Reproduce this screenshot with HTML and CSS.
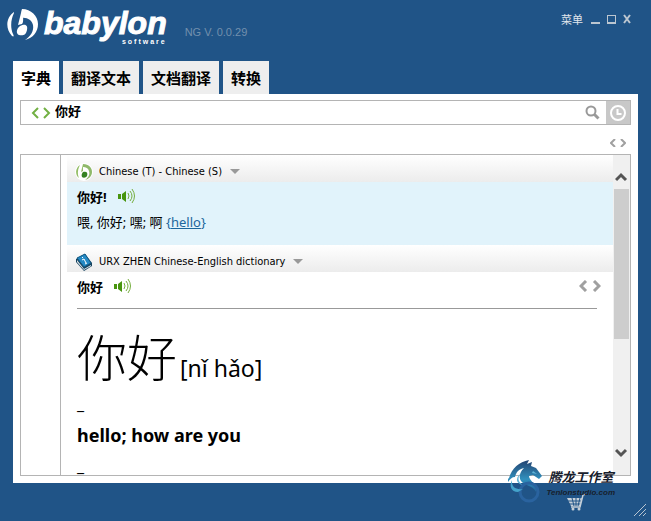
FILE: index.html
```html
<!DOCTYPE html>
<html lang="zh-CN">
<head>
  <meta charset="UTF-8" />
  <meta name="viewport" content="width=device-width, initial-scale=1.0" />
  <title>Babylon NG</title>
  <link rel="stylesheet" href="styles.css">
</head>
<body>
  <!-- Title bar -->
  <header class="title-bar">
    <div class="logo">
      <svg class="logo-mark" viewBox="0 0 32 32" aria-hidden="true">
        <path d="M7 3C-1 8-2 20 5 27c2 1 2 0 1-2C3 18 4 10 7 4z"/>
        <path d="M15 0c9 0 16 7 16 15 0 8-5 14-13 16 6-4 9-9 8-15-1-5-6-8-12-7z"/>
        <path d="M15 0l-4 16 4-1c2-2 1-9 0-15z"/>
        <path d="M13 17c6-3 8 0 7 4-1 5-4 6-8 5-3-1-3-6 1-9z"/>
      </svg>
      <div class="logo-text">
        <span class="logo-name">babylon</span>
        <span class="logo-sub">software</span>
      </div>
    </div>
    <span class="version">NG V. 0.0.29</span>
    <div class="window-controls">
      <button class="menu-button">菜单</button>
      <button class="window-button" aria-label="Minimize">
        <svg width="11" height="12" viewBox="0 0 11 12"><path d="M1 10h9" stroke-width="2"/></svg>
      </button>
      <button class="window-button" aria-label="Maximize">
        <svg width="11" height="12" viewBox="0 0 11 12"><path d="M1.500 2v8M1 2.500h9M9.500 2v8"/><path d="M1 10h9" stroke-width="2"/></svg>
      </button>
      <button class="window-button" aria-label="Close">
        <svg width="11" height="12" viewBox="0 0 11 12"><path d="M2 2l6 8M8 2l-6 8" stroke-width="2"/></svg>
      </button>
    </div>
  </header>

  <!-- Tabs -->
  <nav class="tabs">
    <button class="tab active">字典</button>
    <button class="tab">翻译文本</button>
    <button class="tab">文档翻译</button>
    <button class="tab">转换</button>
  </nav>

  <main class="panel">
    <!-- Search box -->
    <div class="search-box">
      <svg class="search-arrows" width="20" height="12" viewBox="0 0 20 12" aria-hidden="true"><path d="M7 1L2 6l5 5M13 1l5 5-5 5"/></svg>
      <input class="search-input" type="text" value="你好" aria-label="查词">
      <button class="search-button" aria-label="Search">
        <svg width="16" height="16" viewBox="0 0 16 16"><circle cx="7" cy="6" r="4.500"/><path d="M10.500 9.500l4 4" stroke-width="3"/></svg>
      </button>
      <button class="history-button" aria-label="History">
        <svg width="18" height="18" viewBox="0 0 18 18"><circle cx="9" cy="9" r="7"/><path d="M8.500 5v5h4"/></svg>
      </button>
    </div>

    <div class="result-nav">
      <button class="nav-arrow small" aria-label="Previous"><svg width="6" height="8" viewBox="0 0 6 8"><path d="M5 0L1 4l4 4"/></svg></button>
      <button class="nav-arrow small" aria-label="Next"><svg width="6" height="8" viewBox="0 0 6 8"><path d="M1 0l4 4-4 4"/></svg></button>
    </div>

    <!-- Results -->
    <div class="results">
      <aside class="gutter"></aside>
      <div class="entries">
        <section class="entry highlighted">
          <div class="entry-header">
            <svg class="entry-icon" viewBox="0 0 18 18" aria-hidden="true">
              <circle cx="9" cy="9" r="9" fill="#fff"/>
              <path d="M5 2C0 5 0 12 4 15 2 10 3 6 5 2z" fill="#93bd65"/>
              <path d="M8 1c6 0 9 4 9 8s-3 7-7 8c4-3 5-6 4-9-1-3-3-4-6-4z" fill="#8fb96a"/>
              <path d="M8 1L6 9l2-1z" fill="#93bd65"/>
              <path d="M8 9c4-1 5 1 4 4-1 2-4 2-5 1-1-2 0-4 1-5z" fill="#348220"/>
            </svg>
            <span class="entry-title">Chinese (T) - Chinese (S)</span>
            <button class="dropdown" aria-label="Options"></button>
          </div>
          <div class="entry-body">
            <div class="headword">
              <b>你好!</b>
              <button class="speak" aria-label="Listen">
                <svg width="17" height="14" viewBox="0 0 17 14"><path class="solid" d="M0 5h3v5H0zM4 5l4-3v11L4 10z"/><path d="M10 4q2 3 0 6M12 2q4 5 0 10M14 0q5 7 0 14"/></svg>
              </button>
            </div>
            <p class="definition">喂, 你好; 嘿; 啊 <a href="#hello">{<u>hello</u>}</a></p>
          </div>
        </section>

        <section class="entry">
          <div class="entry-header">
            <svg class="entry-icon" viewBox="0 0 18 18" aria-hidden="true">
              <path d="M1 6l9-5 7 9v3l-8 5-8-9z" fill="#17435f"/>
              <path d="M2 7l7 9 7-4v1l-7 4-7-8z" fill="#e2ebef"/>
              <path d="M2 5l8-4 6 9-7 4z" fill="#2389c4"/>
              <path d="M2 5l8-4 6 9-7 4z" fill="none" stroke="#125881"/>
              <path d="M7 5l1-1M7 7l2-1 2 4M10 11l2-1" fill="none" stroke="#fff"/>
            </svg>
            <span class="entry-title">URX ZHEN Chinese-English dictionary</span>
            <button class="dropdown" aria-label="Options"></button>
          </div>
          <div class="entry-body">
            <div class="headword">
              <b>你好</b>
              <button class="speak" aria-label="Listen">
                <svg width="17" height="14" viewBox="0 0 17 14"><path class="solid" d="M0 5h3v5H0zM4 5l4-3v11L4 10z"/><path d="M10 4q2 3 0 6M12 2q4 5 0 10M14 0q5 7 0 14"/></svg>
              </button>
              <div class="entry-nav">
                <button class="nav-arrow" aria-label="Previous"><svg width="9" height="12" viewBox="0 0 9 12"><path d="M7 1L2 6l5 5"/></svg></button>
                <button class="nav-arrow" aria-label="Next"><svg width="9" height="12" viewBox="0 0 9 12"><path d="M2 1l5 5-5 5"/></svg></button>
              </div>
            </div>
            <hr>
            <p class="pinyin"><span class="hanzi">你好</span>[nǐ hǎo]</p>
            <p class="dash">_</p>
            <p class="meaning">hello; how are you</p>
            <p class="dash">_</p>
          </div>
        </section>
      </div>

      <div class="scrollbar">
        <button class="scroll-button" aria-label="Scroll up"><svg width="13" height="10" viewBox="0 0 13 10"><path d="M1 8l5-5 5 5"/></svg></button>
        <div class="scroll-thumb"></div>
        <button class="scroll-button down" aria-label="Scroll down"><svg width="13" height="10" viewBox="0 0 13 10"><path d="M1 2l5 5 5-5"/></svg></button>
      </div>
    </div>
  </main>

  <footer class="status-bar">
    <button class="cart" aria-label="Shop">
      <svg width="20" height="18" viewBox="0 0 20 18"><path d="M0 5h15l-2 8H4z" fill="#c6d0d9"/><path d="M1 8h14M2 11h12M5 5l2 8M9 5v8M13 5l-2 8" stroke="#205487" fill="none"/><path d="M19 1l-3 1-3 12H4" stroke="#c6d0d9" fill="none" stroke-width="1.500"/><circle cx="6" cy="16" r="1.500" fill="#c6d0d9"/><circle cx="12" cy="16" r="1.500" fill="#c6d0d9"/></svg>
    </button>
    <svg class="grip" width="14" height="14" viewBox="0 0 14 14" aria-hidden="true"><path d="M1 13L13 1M6 13l7-7M10 13l3-3"/></svg>
  </footer>

  <!-- Studio badge over the bottom edge -->
  <div class="studio">
    <svg class="studio-logo" width="36" height="44" viewBox="0 0 36 44" aria-hidden="true">
      <defs>
        <linearGradient id="dragon" x1="0" y1="0" x2="0" y2="1">
          <stop offset="0" stop-color="#234270"/>
          <stop offset=".6" stop-color="#3190bd"/>
          <stop offset="1" stop-color="#226398"/>
        </linearGradient>
      </defs>
      <path d="M1 18C4 8 11 2 21 0l-2 4 5-2-1 4 5 2 6 8-3 3-6-4-4 1c0 5 9 8 7 16-3-7-12-6-15-11-3-5 0-10 3-13-5 1-8 4-9 9-3 0-5 2-7 5 0-4 0-3 1-4z" fill="url(#dragon)"/>
      <path d="M13 13c-4 5-3 9 2 12-6-1-9-6-2-12zM25 11l4 3-5-1z" fill="#5fb4d8"/>
      <circle cx="21" cy="32" r="9" fill="none" stroke="#2a639f" stroke-width="3"/>
      <path d="M4 20c-1 7 4 10 11 9l-5 3C3 32 1 26 4 20z" fill="#44a3cb"/>
    </svg>
    <div class="studio-text">
      <span class="studio-name">腾龙工作室</span>
      <span class="studio-url">Tenlonstudio.com</span>
    </div>
  </div>
</body>
</html>
```
FILE: styles.css
```css
:root {
  --blue: #205487;
  --border: #b4b4b4;
  --text-font: "Noto Sans", "Noto Sans CJK SC", sans-serif;
}

* {
  margin: 0;
  padding: 0;
  box-sizing: border-box;
}
body {
  font-family: var(--text-font);
  background: var(--blue);
  color: #000;
  height: 100vh;
  display: flex;
  flex-direction: column;
  overflow: hidden;
  position: relative;
}
button {
  border: none;
  background: none;
  font-family: inherit;
  cursor: pointer;
}
svg { display: block; }

/* Title bar */
.title-bar {
  display: flex;
  align-items: flex-start;
  height: 61px;
  padding: 9px 18px 0 7px;
}
.logo {
  display: flex;
  gap: 5px;
}
.logo-mark {
  width: 32px;
  height: 32px;
  fill: #fff;
}
.logo-text {
  display: flex;
  flex-direction: column;
  color: #fff;
  font-family: "Liberation Sans", sans-serif;
  font-weight: bold;
}
.logo-name {
  font-size: 32px;
  line-height: 29px;
  font-style: italic;
  -webkit-text-stroke: 1px #fff;
}
.logo-sub {
  font-size: 7px;
  line-height: 7px;
  letter-spacing: 2px;
  text-align: right;
}
.version {
  margin: 16px 0 0 18px;
  color: #7390ad;
  font-family: "Liberation Sans", sans-serif;
  font-size: 11px;
  line-height: 14px;
}
.window-controls {
  display: flex;
  align-items: center;
  gap: 5px;
  margin-left: auto;
  padding-top: 2px;
}
.menu-button {
  color: #e0e6ec;
  font-family: "Noto Sans CJK SC", sans-serif;
  font-size: 11px;
  line-height: 16px;
  margin-right: 2px;
}
.window-button svg {
  fill: none;
  stroke: #bcc6d0;
}

/* Tabs */
.tabs {
  display: flex;
  gap: 4px;
  padding-left: 13px;
}
.tab {
  height: 33px;
  padding: 0 8px;
  background: #eee;
  font-family: "Noto Sans CJK SC", sans-serif;
  font-size: 15px;
  font-weight: bold;
}
.tab.active { background: #fff; }

.panel {
  flex: 1;
  min-height: 0;
  display: flex;
  flex-direction: column;
  margin: 0 13px;
  padding: 6px 7px 7px;
  background: #fff;
}

/* Search box */
.search-box {
  display: flex;
  align-items: center;
  height: 25px;
  border: 1px solid var(--border);
  flex-shrink: 0;
}
.search-arrows {
  margin-left: 10px;
  fill: none;
  stroke: #72b043;
  stroke-width: 2;
}
.search-input {
  flex: 1;
  min-width: 0;
  height: 23px;
  padding: 0 4px 4px;
  border: none;
  outline: none;
  background: transparent;
  font-family: "Noto Sans CJK SC", sans-serif;
  font-size: 13px;
  font-weight: bold;
}
.search-button { padding: 0 6px; }
.search-button svg {
  fill: none;
  stroke: #999;
  stroke-width: 2;
}
.history-button {
  display: flex;
  align-items: center;
  justify-content: center;
  width: 24px;
  height: 23px;
  background: #c8c8c8;
}
.history-button svg {
  fill: none;
  stroke: #fff;
  stroke-width: 2;
}

.result-nav {
  display: flex;
  align-items: center;
  justify-content: flex-end;
  gap: 4px;
  height: 29px;
  padding: 6px 5px 0 0;
  flex-shrink: 0;
}
.nav-arrow svg {
  fill: none;
  stroke: #a0a0a0;
  stroke-width: 3;
}
.nav-arrow.small svg { stroke-width: 2; }

/* Results */
.results {
  flex: 1;
  min-height: 0;
  display: flex;
  border: 1px solid var(--border);
}
.gutter {
  width: 40px;
  border-right: 1px solid var(--border);
  flex-shrink: 0;
}
.entries {
  flex: 1;
  min-width: 0;
  padding-left: 6px;
  overflow: hidden;
}
.entry.highlighted { background: #e1f3fb; }
.entry-header {
  display: flex;
  align-items: center;
  height: 27px;
  padding: 6px 0 0 8px;
  background: linear-gradient(#fff, #ececec);
}
.entry-icon {
  width: 18px;
  height: 18px;
}
.entry-title {
  margin-left: 6px;
  font-family: "DejaVu Sans Condensed", "Noto Sans", sans-serif;
  font-size: 11px;
  line-height: 16px;
}
.dropdown {
  margin-left: 8px;
  border: 5px solid transparent;
  border-top-color: #999;
  border-bottom: none;
}
.entry-body { padding: 0 16px 0 10px; }
.highlighted .entry-body { padding-bottom: 11px; }
.headword {
  display: flex;
  align-items: center;
  height: 28px;
  font-size: 13px;
  gap: 11px;
}
.speak svg {
  fill: none;
  stroke: #74ad3e;
}
.speak .solid {
  fill: #48950f;
  stroke: none;
}
.definition {
  font-size: 13px;
  line-height: 24px;
}
.definition a {
  color: #1c669c;
  text-decoration: none;
}
.entry-nav {
  display: flex;
  gap: 4px;
  margin-left: auto;
  margin-right: -4px;
}
hr {
  margin-top: 8px;
  border: none;
  border-top: 1px solid #999;
}
.pinyin {
  margin-top: 18px;
  font-size: 23px;
  line-height: 56px;
}
.hanzi {
  margin-right: 3px;
  font-family: "Noto Sans CJK SC", sans-serif;
  font-size: 50px;
  font-weight: 300;
}
.dash {
  font-size: 16px;
  line-height: 16px;
}
.meaning {
  font-size: 18px;
  line-height: 46px;
  font-weight: bold;
}

/* Scrollbar */
.scrollbar {
  display: flex;
  flex-direction: column;
  width: 17px;
  background: #f0f0f0;
  flex-shrink: 0;
}
.scroll-button {
  display: flex;
  align-items: flex-end;
  justify-content: center;
  height: 34px;
  padding-bottom: 7px;
}
.scroll-button.down {
  margin-top: auto;
  padding-bottom: 17px;
}
.scroll-button svg {
  fill: none;
  stroke: #555;
  stroke-width: 3;
}
.scroll-thumb {
  height: 47%;
  margin: 0 1px;
  background: #cdcdcd;
}

/* Status bar */
.status-bar {
  display: flex;
  align-items: flex-end;
  justify-content: flex-end;
  height: 38px;
  padding: 0 4px 4px 0;
  flex-shrink: 0;
}
.cart { margin: 0 46px 6px 0; }
.grip {
  fill: none;
  stroke: #b8c5d2;
}

/* Studio badge */
.studio {
  position: absolute;
  right: 36px;
  bottom: 17px;
  display: flex;
  align-items: center;
  gap: 2px;
}
.studio-text {
  display: flex;
  flex-direction: column;
  padding-top: 4px;
  color: #17202c;
  font-style: italic;
  font-weight: bold;
}
.studio-name {
  font-family: "Noto Sans CJK SC", sans-serif;
  font-size: 13px;
  line-height: 18px;
  padding-left: 2px;
}
.studio-url {
  font-family: "Liberation Sans", sans-serif;
  font-size: 8px;
  line-height: 14px;
}
```
